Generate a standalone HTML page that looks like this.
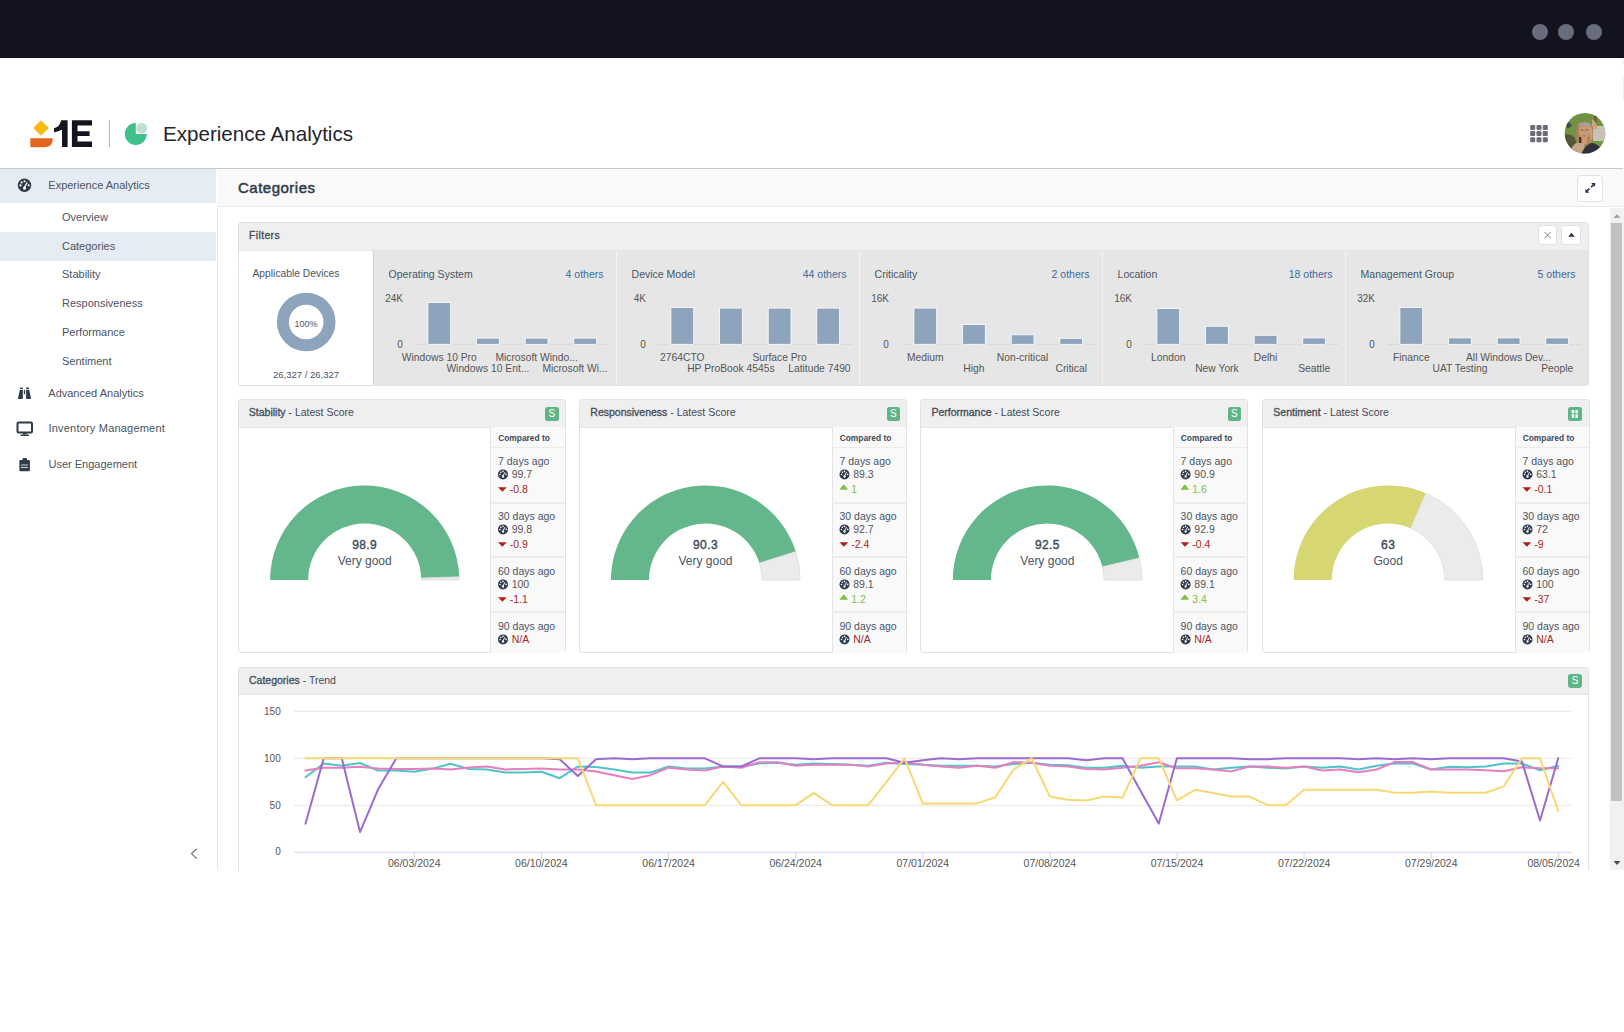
<!DOCTYPE html><html><head><meta charset="utf-8"><style>
*{box-sizing:border-box;margin:0;padding:0}
html,body{width:1624px;height:1032px;overflow:hidden;background:#fff;font-family:"Liberation Sans",sans-serif;color:#4a5464}
.a{position:absolute}
.t{position:absolute;white-space:nowrap;line-height:1}
</style></head><body><div class="a" style="left:0;top:0;width:1624px;height:58px;background:#12131e"></div><div class="a" style="left:1532px;top:24px;width:16px;height:16px;border-radius:50%;background:#676d7c"></div><div class="a" style="left:1558px;top:24px;width:16px;height:16px;border-radius:50%;background:#676d7c"></div><div class="a" style="left:1586px;top:24px;width:16px;height:16px;border-radius:50%;background:#676d7c"></div><div class="a" style="left:0;top:168px;width:1623px;height:1px;background:#c3c9c6"></div><svg class="a" style="left:0;top:100px" width="420" height="60" viewBox="0 100 420 60">
<path d="M41 120.3 L48.8 128 L41 135.8 L33.3 128 Z" fill="#fdb913"/>
<path d="M30.3 138.3 H52.8 Q52.8 147.2 45.3 147.2 H30.3 Z" fill="#e2661f"/>
<path d="M62 120.3 H67.6 V147.1 H62 V129.6 Q58.8 131.9 54 132.2 V128.2 Q59.6 127.2 61.2 120.3 Z" fill="#14141f"/>
<path d="M71.9 120.3 H92 V125.6 H77.5 V131.2 H89.6 V136 H77.5 V141.6 H92 V147.1 H71.9 Z" fill="#14141f"/>
<rect x="109" y="120" width="1" height="27" fill="#b5b5b8"/>
<path d="M135.8 123 A11 11 0 1 0 146.8 134 H135.8 Z" fill="#40c08a"/>
<circle cx="141.7" cy="128.2" r="5.4" fill="#bfe0d0"/>
</svg><div class="t" style="left:163px;top:123.5px;font-size:20.6px;color:#23252d">Experience Analytics</div><svg class="a" style="left:0;top:0" width="1624" height="170"><rect x="1530.2" y="125.0" width="5" height="5" rx="1.2" fill="#6a6a78"/><rect x="1536.5" y="125.0" width="5" height="5" rx="1.2" fill="#6a6a78"/><rect x="1542.8" y="125.0" width="5" height="5" rx="1.2" fill="#6a6a78"/><rect x="1530.2" y="131.1" width="5" height="5" rx="1.2" fill="#6a6a78"/><rect x="1536.5" y="131.1" width="5" height="5" rx="1.2" fill="#6a6a78"/><rect x="1542.8" y="131.1" width="5" height="5" rx="1.2" fill="#6a6a78"/><rect x="1530.2" y="137.2" width="5" height="5" rx="1.2" fill="#6a6a78"/><rect x="1536.5" y="137.2" width="5" height="5" rx="1.2" fill="#6a6a78"/><rect x="1542.8" y="137.2" width="5" height="5" rx="1.2" fill="#6a6a78"/></svg><svg class="a" style="left:1564px;top:113px" width="42" height="42" viewBox="0 0 42 42">
<defs><clipPath id="av"><circle cx="21" cy="20.3" r="20.3"/></clipPath></defs>
<g clip-path="url(#av)">
<rect width="42" height="42" fill="#6f9342"/>
<path d="M0 22 Q6 20 10 24 Q14 30 12 42 H0 Z" fill="#55553a"/>
<path d="M2 10 Q5 8 8 12 Q6 16 3 15 Z" fill="#3e4a52"/>
<rect x="30" y="3" width="2.5" height="18" fill="#6b5a3a"/>
<path d="M29 13 H42 V29 H29 Z" fill="#c9c1b4"/>
<path d="M28 6 Q34 10 33 16 H28 Z" fill="#c9a77c"/>
<path d="M29 28 H42 V34 H29 Z" fill="#6e9a44"/>
<ellipse cx="21" cy="12.5" rx="5.5" ry="3" fill="#a2a3a8"/>
<path d="M12.5 14 Q13 8 20.5 9 Q28 9 29 15 Q30 26 27 33 L14 33 Q11 25 12.5 14 Z" fill="#a8835e"/>
<ellipse cx="20.4" cy="18.3" rx="5.6" ry="7.8" fill="#c99a74"/><path d="M14.5 11.5 Q20 7.5 27 11 L26.5 13.5 Q20 10.5 15 13.5 Z" fill="#9fa1a8"/><path d="M25.5 12 Q29 14 28.5 24 L26 30 Z" fill="#c3a27c"/>
<rect x="17" y="16.5" width="2.4" height="1" fill="#6a5238"/><rect x="21.5" y="16.5" width="2.4" height="1" fill="#6a5238"/>
<rect x="18.8" y="22.6" width="3" height="0.8" fill="#8c5c48"/>
<rect x="17.5" y="25" width="5.5" height="6" fill="#d09a6c"/>
<rect x="15" y="24" width="2.3" height="10" fill="#3b3631"/>
<path d="M6 42 Q7 31 14 29.5 L20 31 Q21 36 19 42 Z" fill="#c7a687"/>
<path d="M17 42 Q20 33 27 30 Q35 29 40 42 Z" fill="#2e313d"/>
</g></svg><div class="a" style="left:1623px;top:59px;width:1px;height:6px;background:#eeeeee"></div><div class="a" style="left:1623px;top:77px;width:1px;height:23px;background:#eeeeee"></div><div class="a" style="left:216.5px;top:169px;width:1px;height:701.5px;background:#e9e9e9"></div><div class="a" style="left:0;top:169px;width:216px;height:34px;background:#e5ecf3"></div><div class="a" style="left:0;top:232px;width:216px;height:29px;background:#e5ecf3"></div><svg class="a" style="left:0;top:0" width="217" height="870"><circle cx="24.5" cy="185.25" r="6.7" fill="#2f3a4b"/><path d="M24.50 187.39 L27.18 182.17" stroke="#fff" stroke-width="1.27"/><ellipse cx="24.50" cy="188.13" rx="1.47" ry="1.61" fill="#fff"/><circle cx="21.62" cy="182.50" r="1.07" fill="#fff"/><circle cx="24.50" cy="181.23" r="1.07" fill="#fff"/><circle cx="20.48" cy="185.38" r="1.07" fill="#fff"/><circle cx="28.72" cy="185.25" r="1.07" fill="#fff"/><rect x="20" y="387.6" width="2.9" height="1.6" rx="0.7" fill="#2f3a4b"/><rect x="26.1" y="387.6" width="2.9" height="1.6" rx="0.7" fill="#2f3a4b"/><path d="M19.8 389.9 H22.9 V398.3 Q22.9 399.1 22.1 399.1 H18.7 Q17.9 399.1 18 398.2 Z M26.1 389.9 H29.2 L31 398.2 Q31.1 399.1 30.3 399.1 H26.9 Q26.1 399.1 26.1 398.3 Z M23.9 390 H25.1 V394.2 H23.9 Z" fill="#2f3a4b"/><rect x="17.5" y="422.5" width="14.5" height="10" rx="1" fill="none" stroke="#2f3a4b" stroke-width="2"/><rect x="23" y="432.5" width="3.5" height="2" fill="#2f3a4b"/><rect x="20.5" y="434.5" width="8.5" height="1.5" rx="0.5" fill="#2f3a4b"/><rect x="19.4" y="460" width="10.5" height="11.2" rx="1.2" fill="#2f3a4b"/><rect x="22.5" y="458" width="4.5" height="3" rx="1" fill="#2f3a4b"/><rect x="21" y="464.5" width="7" height="1" fill="#cfd4da"/><rect x="21" y="467" width="7" height="1" fill="#cfd4da"/><path d="M196.8 848.8 L191.5 853.6 L196.8 858.6" fill="none" stroke="#5c6270" stroke-width="1.1"/></svg><div class="t" style="left:48.3px;top:179.8px;font-size:11px;color:#4a5464;">Experience Analytics</div><div class="t" style="left:62px;top:211.8px;font-size:11px;color:#4a5464;">Overview</div><div class="t" style="left:62px;top:240.7px;font-size:11px;color:#4a5464;">Categories</div><div class="t" style="left:62px;top:269.4px;font-size:11px;color:#4a5464;">Stability</div><div class="t" style="left:62px;top:298.2px;font-size:11px;color:#4a5464;">Responsiveness</div><div class="t" style="left:62px;top:327.0px;font-size:11px;color:#4a5464;">Performance</div><div class="t" style="left:62px;top:355.8px;font-size:11px;color:#4a5464;">Sentiment</div><div class="t" style="left:48.3px;top:387.8px;font-size:11px;color:#4a5464;">Advanced Analytics</div><div class="t" style="left:48.5px;top:423.3px;font-size:11px;color:#4a5464;letter-spacing:0.2px">Inventory Management</div><div class="t" style="left:48.5px;top:458.6px;font-size:11px;color:#4a5464;">User Engagement</div><div class="a" style="left:217px;top:169px;width:1407px;height:38px;background:#fafafa;border-bottom:1px solid #e9e9e9"></div><div class="t" style="left:238px;top:180px;font-size:15px;letter-spacing:0.5px;-webkit-text-stroke:0.5px #2f3a4b;color:#2f3a4b">Categories</div><div class="a" style="left:1577.3px;top:174.5px;width:26px;height:27px;background:#fff;border:1px solid #e3e3e3;border-radius:4px"></div>
<svg class="a" style="left:1577px;top:174px" width="27" height="27"><path d="M16.3 10.9 L14.2 13.1 M10.2 16.9 L12.3 14.7" stroke="#2a3447" stroke-width="1.7"/><path d="M18.2 9 H14.1 L18.2 13.1 Z" fill="#2a3447"/><path d="M8.3 18.8 V14.7 L12.4 18.8 Z" fill="#2a3447"/></svg><div class="a" style="left:1610px;top:208px;width:14px;height:662px;background:#f1f1f1"></div><div class="a" style="left:1611.1px;top:222.8px;width:11.2px;height:578px;background:#c1c1c1"></div><svg class="a" style="left:1610px;top:208px" width="14" height="662"><path d="M3.5 10 L7 6 L10.5 10 Z" fill="#a3a3a3"/><path d="M3.5 653 L7 657 L10.5 653 Z" fill="#505050"/></svg><div class="a" style="left:237.5px;top:222px;width:1351.5px;height:163.5px;border:1px solid #e2e2e2;border-radius:3px;background:#fff;overflow:hidden"><div class="a" style="left:0;top:0;width:100%;height:27.5px;background:#efefef;border-bottom:1px solid #e6e6e6"></div></div><div class="t" style="left:249.0px;top:230.1px;font-size:10.5px;color:#414a58;letter-spacing:0.35px;-webkit-text-stroke:0.3px #414a58">Filters</div><div class="a" style="left:1538.3px;top:225.3px;width:19px;height:20px;background:#fff;border:1px solid #e0e0e0;border-radius:3.5px"></div><div class="a" style="left:1561.3px;top:225.3px;width:20px;height:20px;background:#fff;border:1px solid #e0e0e0;border-radius:3.5px"></div><svg class="a" style="left:1530px;top:220px" width="60" height="30"><path d="M14.5 12 L20.7 18.3 M20.7 12 L14.5 18.3" stroke="#7a7a7a" stroke-width="0.9"/><path d="M38.2 16.8 L41.5 12.8 L44.8 16.8 Z" fill="#2a3447"/></svg><div class="a" style="left:373px;top:250.5px;width:1px;height:134px;background:#d2d2d2"></div><div class="t" style="left:252.5px;top:268.8px;font-size:10.3px;color:#4a5464;">Applicable Devices</div><svg class="a" style="left:270px;top:286px" width="72" height="72"><circle cx="36.2" cy="36" r="23.3" fill="none" stroke="#8ea4bc" stroke-width="12"/></svg><div class="t" style="left:106.0px;width:400px;text-align:center;top:319.7px;font-size:9px;color:#4a5464;">100%</div><div class="t" style="left:106.0px;width:400px;text-align:center;top:369.6px;font-size:9.5px;color:#4a5464;">26,327 / 26,327</div><div class="a" style="left:374px;top:250.5px;width:242px;height:134px;background:#e6e6e6"></div><div class="t" style="left:388.6px;top:269.1px;font-size:10.5px;color:#4a5464;">Operating System</div><div class="t" style="left:203.5px;width:400px;text-align:right;top:269.1px;font-size:10.5px;color:#3b6aa0;">4 others</div><div class="t" style="left:3.0px;width:400px;text-align:right;top:294.4px;font-size:10px;color:#555;">24K</div><div class="t" style="left:2.7px;width:400px;text-align:right;top:339.5px;font-size:10px;color:#555;">0</div><div class="t" style="left:401.8px;top:352.8px;font-size:10.3px;color:#555;">Windows 10 Pro</div><div class="t" style="left:446.4px;top:364.3px;font-size:10.3px;color:#555;">Windows 10 Ent...</div><div class="t" style="left:495.4px;top:352.8px;font-size:10.3px;color:#555;">Microsoft Windo...</div><div class="t" style="left:542.4px;top:364.3px;font-size:10.3px;color:#555;">Microsoft Wi...</div><div class="a" style="left:617px;top:250.5px;width:242px;height:134px;background:#e6e6e6"></div><div class="a" style="left:616px;top:250.5px;width:1px;height:134px;background:#f3f3f3"></div><div class="t" style="left:631.6px;top:269.1px;font-size:10.5px;color:#4a5464;">Device Model</div><div class="t" style="left:446.5px;width:400px;text-align:right;top:269.1px;font-size:10.5px;color:#3b6aa0;">44 others</div><div class="t" style="left:246.0px;width:400px;text-align:right;top:294.4px;font-size:10px;color:#555;">4K</div><div class="t" style="left:245.7px;width:400px;text-align:right;top:339.5px;font-size:10px;color:#555;">0</div><div class="t" style="left:660.1px;top:352.8px;font-size:10.3px;color:#555;">2764CTO</div><div class="t" style="left:687.2px;top:364.3px;font-size:10.3px;color:#555;">HP ProBook 4545s</div><div class="t" style="left:752.4px;top:352.8px;font-size:10.3px;color:#555;">Surface Pro</div><div class="t" style="left:788.2px;top:364.3px;font-size:10.3px;color:#555;">Latitude 7490</div><div class="a" style="left:860px;top:250.5px;width:242px;height:134px;background:#e6e6e6"></div><div class="a" style="left:859px;top:250.5px;width:1px;height:134px;background:#f3f3f3"></div><div class="t" style="left:874.6px;top:269.1px;font-size:10.5px;color:#4a5464;">Criticality</div><div class="t" style="left:689.5px;width:400px;text-align:right;top:269.1px;font-size:10.5px;color:#3b6aa0;">2 others</div><div class="t" style="left:489.0px;width:400px;text-align:right;top:294.4px;font-size:10px;color:#555;">16K</div><div class="t" style="left:488.7px;width:400px;text-align:right;top:339.5px;font-size:10px;color:#555;">0</div><div class="t" style="left:907.0px;top:352.8px;font-size:10.3px;color:#555;">Medium</div><div class="t" style="left:963.3px;top:364.3px;font-size:10.3px;color:#555;">High</div><div class="t" style="left:996.8px;top:352.8px;font-size:10.3px;color:#555;">Non-critical</div><div class="t" style="left:1055.5px;top:364.3px;font-size:10.3px;color:#555;">Critical</div><div class="a" style="left:1103px;top:250.5px;width:242px;height:134px;background:#e6e6e6"></div><div class="a" style="left:1102px;top:250.5px;width:1px;height:134px;background:#f3f3f3"></div><div class="t" style="left:1117.6px;top:269.1px;font-size:10.5px;color:#4a5464;">Location</div><div class="t" style="left:932.5px;width:400px;text-align:right;top:269.1px;font-size:10.5px;color:#3b6aa0;">18 others</div><div class="t" style="left:732.0px;width:400px;text-align:right;top:294.4px;font-size:10px;color:#555;">16K</div><div class="t" style="left:731.7px;width:400px;text-align:right;top:339.5px;font-size:10px;color:#555;">0</div><div class="t" style="left:1151.1px;top:352.8px;font-size:10.3px;color:#555;">London</div><div class="t" style="left:1195.2px;top:364.3px;font-size:10.3px;color:#555;">New York</div><div class="t" style="left:1253.8px;top:352.8px;font-size:10.3px;color:#555;">Delhi</div><div class="t" style="left:1298.2px;top:364.3px;font-size:10.3px;color:#555;">Seattle</div><div class="a" style="left:1346px;top:250.5px;width:242px;height:134px;background:#e6e6e6"></div><div class="a" style="left:1345px;top:250.5px;width:1px;height:134px;background:#f3f3f3"></div><div class="t" style="left:1360.6px;top:269.1px;font-size:10.5px;color:#4a5464;">Management Group</div><div class="t" style="left:1175.5px;width:400px;text-align:right;top:269.1px;font-size:10.5px;color:#3b6aa0;">5 others</div><div class="t" style="left:975.0px;width:400px;text-align:right;top:294.4px;font-size:10px;color:#555;">32K</div><div class="t" style="left:974.7px;width:400px;text-align:right;top:339.5px;font-size:10px;color:#555;">0</div><div class="t" style="left:1393.0px;top:352.8px;font-size:10.3px;color:#555;">Finance</div><div class="t" style="left:1432.5px;top:364.3px;font-size:10.3px;color:#555;">UAT Testing</div><div class="t" style="left:1466.0px;top:352.8px;font-size:10.3px;color:#555;">All Windows Dev...</div><div class="t" style="left:1541.2px;top:364.3px;font-size:10.3px;color:#555;">People</div><svg class="a" style="left:0;top:0" width="1624" height="400"><line x1="415" y1="344.3" x2="609.5" y2="344.3" stroke="#c9d3df" stroke-width="1" stroke-dasharray="2,1"/><rect x="427.9" y="302.6" width="22.8" height="41.7" fill="#8ea4bc" stroke="#fff" stroke-width="0.8"/><rect x="476.5" y="338.1" width="22.8" height="6.2" fill="#8ea4bc" stroke="#fff" stroke-width="0.8"/><rect x="525.2" y="338.1" width="22.8" height="6.2" fill="#8ea4bc" stroke="#fff" stroke-width="0.8"/><rect x="573.8" y="338.1" width="22.8" height="6.2" fill="#8ea4bc" stroke="#fff" stroke-width="0.8"/><line x1="658" y1="344.3" x2="852.5" y2="344.3" stroke="#c9d3df" stroke-width="1" stroke-dasharray="2,1"/><rect x="670.9" y="307.5" width="22.8" height="36.8" fill="#8ea4bc" stroke="#fff" stroke-width="0.8"/><rect x="719.5" y="308.1" width="22.8" height="36.2" fill="#8ea4bc" stroke="#fff" stroke-width="0.8"/><rect x="768.2" y="308.1" width="22.8" height="36.2" fill="#8ea4bc" stroke="#fff" stroke-width="0.8"/><rect x="816.8" y="308.1" width="22.8" height="36.2" fill="#8ea4bc" stroke="#fff" stroke-width="0.8"/><line x1="901" y1="344.3" x2="1095.5" y2="344.3" stroke="#c9d3df" stroke-width="1" stroke-dasharray="2,1"/><rect x="913.9" y="308.1" width="22.8" height="36.2" fill="#8ea4bc" stroke="#fff" stroke-width="0.8"/><rect x="962.5" y="324.4" width="22.8" height="19.9" fill="#8ea4bc" stroke="#fff" stroke-width="0.8"/><rect x="1011.2" y="334.8" width="22.8" height="9.5" fill="#8ea4bc" stroke="#fff" stroke-width="0.8"/><rect x="1059.8" y="338.3" width="22.8" height="6.0" fill="#8ea4bc" stroke="#fff" stroke-width="0.8"/><line x1="1144" y1="344.3" x2="1338.5" y2="344.3" stroke="#c9d3df" stroke-width="1" stroke-dasharray="2,1"/><rect x="1156.9" y="308.5" width="22.8" height="35.8" fill="#8ea4bc" stroke="#fff" stroke-width="0.8"/><rect x="1205.5" y="326.3" width="22.8" height="18.0" fill="#8ea4bc" stroke="#fff" stroke-width="0.8"/><rect x="1254.2" y="335.3" width="22.8" height="9.0" fill="#8ea4bc" stroke="#fff" stroke-width="0.8"/><rect x="1302.8" y="337.9" width="22.8" height="6.4" fill="#8ea4bc" stroke="#fff" stroke-width="0.8"/><line x1="1387" y1="344.3" x2="1581.5" y2="344.3" stroke="#c9d3df" stroke-width="1" stroke-dasharray="2,1"/><rect x="1399.9" y="307.6" width="22.8" height="36.7" fill="#8ea4bc" stroke="#fff" stroke-width="0.8"/><rect x="1448.5" y="337.9" width="22.8" height="6.4" fill="#8ea4bc" stroke="#fff" stroke-width="0.8"/><rect x="1497.2" y="337.9" width="22.8" height="6.4" fill="#8ea4bc" stroke="#fff" stroke-width="0.8"/><rect x="1545.8" y="337.9" width="22.8" height="6.4" fill="#8ea4bc" stroke="#fff" stroke-width="0.8"/></svg><div class="a" style="left:237.5px;top:399px;width:328px;height:254px;border:1px solid #e2e2e2;border-radius:3px;background:#fff;overflow:hidden"><div class="a" style="left:0;top:0;width:100%;height:27.5px;background:#efefef;border-bottom:1px solid #e6e6e6"></div></div><div class="t" style="left:248.8px;top:407.2px;font-size:10.5px;color:#414a58"><span style="-webkit-text-stroke:0.3px #414a58">Stability</span> - Latest Score</div><div class="a" style="left:545.0px;top:407px;width:13.5px;height:13.5px;background:#5fb586;border-radius:2.5px;color:#fff;font-size:10px;line-height:13.5px;text-align:center">S</div><div class="a" style="left:490.2px;top:427px;width:74.3px;height:225.5px;background:#f9f9f9;border-left:1.5px solid #e4e4e4"></div><div class="a" style="left:490.2px;top:446.9px;width:74.8px;height:1.5px;background:#ececec"></div><div class="a" style="left:490.2px;top:502.0px;width:74.8px;height:1.5px;background:#ececec"></div><div class="a" style="left:490.2px;top:556.3px;width:74.8px;height:1.5px;background:#ececec"></div><div class="a" style="left:490.2px;top:611.4px;width:74.8px;height:1.5px;background:#ececec"></div><div class="t" style="left:498.2px;top:433.9px;font-size:8.4px;color:#414a58;font-weight:bold;">Compared to</div><div class="t" style="left:498.0px;top:455.8px;font-size:10.5px;color:#4a5464;">7 days ago</div><div class="t" style="left:511.7px;top:469.0px;font-size:10.5px;color:#555;">99.7</div><div class="t" style="left:509.7px;top:484.3px;font-size:10.5px;color:#a52626;">-0.8</div><div class="t" style="left:498.0px;top:510.8px;font-size:10.5px;color:#4a5464;">30 days ago</div><div class="t" style="left:511.7px;top:524.0px;font-size:10.5px;color:#555;">99.8</div><div class="t" style="left:509.7px;top:539.3px;font-size:10.5px;color:#a52626;">-0.9</div><div class="t" style="left:498.0px;top:565.8px;font-size:10.5px;color:#4a5464;">60 days ago</div><div class="t" style="left:511.7px;top:579.0px;font-size:10.5px;color:#555;">100</div><div class="t" style="left:509.7px;top:594.3px;font-size:10.5px;color:#a52626;">-1.1</div><div class="t" style="left:498.0px;top:620.8px;font-size:10.5px;color:#4a5464;">90 days ago</div><div class="t" style="left:511.7px;top:634.0px;font-size:10.5px;color:#a52626;">N/A</div><div class="t" style="left:164.7px;width:400px;text-align:center;top:538.8px;font-size:12px;color:#414a58;letter-spacing:0.4px;-webkit-text-stroke:0.4px #414a58">98.9</div><div class="t" style="left:164.7px;width:400px;text-align:center;top:554.7px;font-size:12px;color:#4a5464;">Very good</div><div class="a" style="left:579.0px;top:399px;width:328px;height:254px;border:1px solid #e2e2e2;border-radius:3px;background:#fff;overflow:hidden"><div class="a" style="left:0;top:0;width:100%;height:27.5px;background:#efefef;border-bottom:1px solid #e6e6e6"></div></div><div class="t" style="left:590.3px;top:407.2px;font-size:10.5px;color:#414a58"><span style="-webkit-text-stroke:0.3px #414a58">Responsiveness</span> - Latest Score</div><div class="a" style="left:886.5px;top:407px;width:13.5px;height:13.5px;background:#5fb586;border-radius:2.5px;color:#fff;font-size:10px;line-height:13.5px;text-align:center">S</div><div class="a" style="left:831.7px;top:427px;width:74.3px;height:225.5px;background:#f9f9f9;border-left:1.5px solid #e4e4e4"></div><div class="a" style="left:831.7px;top:446.9px;width:74.8px;height:1.5px;background:#ececec"></div><div class="a" style="left:831.7px;top:502.0px;width:74.8px;height:1.5px;background:#ececec"></div><div class="a" style="left:831.7px;top:556.3px;width:74.8px;height:1.5px;background:#ececec"></div><div class="a" style="left:831.7px;top:611.4px;width:74.8px;height:1.5px;background:#ececec"></div><div class="t" style="left:839.7px;top:433.9px;font-size:8.4px;color:#414a58;font-weight:bold;">Compared to</div><div class="t" style="left:839.5px;top:455.8px;font-size:10.5px;color:#4a5464;">7 days ago</div><div class="t" style="left:853.2px;top:469.0px;font-size:10.5px;color:#555;">89.3</div><div class="t" style="left:851.2px;top:484.3px;font-size:10.5px;color:#7dc142;">1</div><div class="t" style="left:839.5px;top:510.8px;font-size:10.5px;color:#4a5464;">30 days ago</div><div class="t" style="left:853.2px;top:524.0px;font-size:10.5px;color:#555;">92.7</div><div class="t" style="left:851.2px;top:539.3px;font-size:10.5px;color:#a52626;">-2.4</div><div class="t" style="left:839.5px;top:565.8px;font-size:10.5px;color:#4a5464;">60 days ago</div><div class="t" style="left:853.2px;top:579.0px;font-size:10.5px;color:#555;">89.1</div><div class="t" style="left:851.2px;top:594.3px;font-size:10.5px;color:#7dc142;">1.2</div><div class="t" style="left:839.5px;top:620.8px;font-size:10.5px;color:#4a5464;">90 days ago</div><div class="t" style="left:853.2px;top:634.0px;font-size:10.5px;color:#a52626;">N/A</div><div class="t" style="left:505.5px;width:400px;text-align:center;top:538.8px;font-size:12px;color:#414a58;letter-spacing:0.4px;-webkit-text-stroke:0.4px #414a58">90.3</div><div class="t" style="left:505.5px;width:400px;text-align:center;top:554.7px;font-size:12px;color:#4a5464;">Very good</div><div class="a" style="left:920.1px;top:399px;width:328px;height:254px;border:1px solid #e2e2e2;border-radius:3px;background:#fff;overflow:hidden"><div class="a" style="left:0;top:0;width:100%;height:27.5px;background:#efefef;border-bottom:1px solid #e6e6e6"></div></div><div class="t" style="left:931.4px;top:407.2px;font-size:10.5px;color:#414a58"><span style="-webkit-text-stroke:0.3px #414a58">Performance</span> - Latest Score</div><div class="a" style="left:1227.6px;top:407px;width:13.5px;height:13.5px;background:#5fb586;border-radius:2.5px;color:#fff;font-size:10px;line-height:13.5px;text-align:center">S</div><div class="a" style="left:1172.8px;top:427px;width:74.3px;height:225.5px;background:#f9f9f9;border-left:1.5px solid #e4e4e4"></div><div class="a" style="left:1172.8px;top:446.9px;width:74.8px;height:1.5px;background:#ececec"></div><div class="a" style="left:1172.8px;top:502.0px;width:74.8px;height:1.5px;background:#ececec"></div><div class="a" style="left:1172.8px;top:556.3px;width:74.8px;height:1.5px;background:#ececec"></div><div class="a" style="left:1172.8px;top:611.4px;width:74.8px;height:1.5px;background:#ececec"></div><div class="t" style="left:1180.8px;top:433.9px;font-size:8.4px;color:#414a58;font-weight:bold;">Compared to</div><div class="t" style="left:1180.6px;top:455.8px;font-size:10.5px;color:#4a5464;">7 days ago</div><div class="t" style="left:1194.3px;top:469.0px;font-size:10.5px;color:#555;">90.9</div><div class="t" style="left:1192.3px;top:484.3px;font-size:10.5px;color:#7dc142;">1.6</div><div class="t" style="left:1180.6px;top:510.8px;font-size:10.5px;color:#4a5464;">30 days ago</div><div class="t" style="left:1194.3px;top:524.0px;font-size:10.5px;color:#555;">92.9</div><div class="t" style="left:1192.3px;top:539.3px;font-size:10.5px;color:#a52626;">-0.4</div><div class="t" style="left:1180.6px;top:565.8px;font-size:10.5px;color:#4a5464;">60 days ago</div><div class="t" style="left:1194.3px;top:579.0px;font-size:10.5px;color:#555;">89.1</div><div class="t" style="left:1192.3px;top:594.3px;font-size:10.5px;color:#7dc142;">3.4</div><div class="t" style="left:1180.6px;top:620.8px;font-size:10.5px;color:#4a5464;">90 days ago</div><div class="t" style="left:1194.3px;top:634.0px;font-size:10.5px;color:#a52626;">N/A</div><div class="t" style="left:847.4px;width:400px;text-align:center;top:538.8px;font-size:12px;color:#414a58;letter-spacing:0.4px;-webkit-text-stroke:0.4px #414a58">92.5</div><div class="t" style="left:847.4px;width:400px;text-align:center;top:554.7px;font-size:12px;color:#4a5464;">Very good</div><div class="a" style="left:1262.0px;top:399px;width:328px;height:254px;border:1px solid #e2e2e2;border-radius:3px;background:#fff;overflow:hidden"><div class="a" style="left:0;top:0;width:100%;height:27.5px;background:#efefef;border-bottom:1px solid #e6e6e6"></div></div><div class="t" style="left:1273.3px;top:407.2px;font-size:10.5px;color:#414a58"><span style="-webkit-text-stroke:0.3px #414a58">Sentiment</span> - Latest Score</div><div class="a" style="left:1568.2px;top:407px;width:13.7px;height:13.6px;background:#5fb586;border-radius:2.5px"></div><svg class="a" style="left:1568.2px;top:407px" width="14" height="14"><rect x="3.6" y="3" width="2.6" height="3.3" fill="#fff"/><rect x="7.4" y="3" width="2.5" height="3.3" fill="#fff"/><rect x="3.6" y="7.3" width="2.6" height="3.5" fill="#fff"/><rect x="7.4" y="7.3" width="2.5" height="3.5" fill="#fff"/></svg><div class="a" style="left:1514.7px;top:427px;width:74.3px;height:225.5px;background:#f9f9f9;border-left:1.5px solid #e4e4e4"></div><div class="a" style="left:1514.7px;top:446.9px;width:74.8px;height:1.5px;background:#ececec"></div><div class="a" style="left:1514.7px;top:502.0px;width:74.8px;height:1.5px;background:#ececec"></div><div class="a" style="left:1514.7px;top:556.3px;width:74.8px;height:1.5px;background:#ececec"></div><div class="a" style="left:1514.7px;top:611.4px;width:74.8px;height:1.5px;background:#ececec"></div><div class="t" style="left:1522.7px;top:433.9px;font-size:8.4px;color:#414a58;font-weight:bold;">Compared to</div><div class="t" style="left:1522.5px;top:455.8px;font-size:10.5px;color:#4a5464;">7 days ago</div><div class="t" style="left:1536.2px;top:469.0px;font-size:10.5px;color:#555;">63.1</div><div class="t" style="left:1534.2px;top:484.3px;font-size:10.5px;color:#a52626;">-0.1</div><div class="t" style="left:1522.5px;top:510.8px;font-size:10.5px;color:#4a5464;">30 days ago</div><div class="t" style="left:1536.2px;top:524.0px;font-size:10.5px;color:#555;">72</div><div class="t" style="left:1534.2px;top:539.3px;font-size:10.5px;color:#a52626;">-9</div><div class="t" style="left:1522.5px;top:565.8px;font-size:10.5px;color:#4a5464;">60 days ago</div><div class="t" style="left:1536.2px;top:579.0px;font-size:10.5px;color:#555;">100</div><div class="t" style="left:1534.2px;top:594.3px;font-size:10.5px;color:#a52626;">-37</div><div class="t" style="left:1522.5px;top:620.8px;font-size:10.5px;color:#4a5464;">90 days ago</div><div class="t" style="left:1536.2px;top:634.0px;font-size:10.5px;color:#a52626;">N/A</div><div class="t" style="left:1188.2px;width:400px;text-align:center;top:538.8px;font-size:12px;color:#414a58;letter-spacing:0.4px;-webkit-text-stroke:0.4px #414a58">63</div><div class="t" style="left:1188.2px;width:400px;text-align:center;top:554.7px;font-size:12px;color:#4a5464;">Good</div><svg class="a" style="left:0;top:0" width="1624" height="700"><circle cx="503.0" cy="474.4" r="5" fill="#2f3a4b"/><path d="M503.00 476.00 L505.00 472.10" stroke="#fff" stroke-width="0.95"/><ellipse cx="503.00" cy="476.55" rx="1.10" ry="1.20" fill="#fff"/><circle cx="500.85" cy="472.35" r="0.80" fill="#fff"/><circle cx="503.00" cy="471.40" r="0.80" fill="#fff"/><circle cx="500.00" cy="474.50" r="0.80" fill="#fff"/><circle cx="506.15" cy="474.40" r="0.80" fill="#fff"/><path d="M498.0 487.2 L506.7 487.2 L502.4 491.7 Z" fill="#b01d1d"/><circle cx="503.0" cy="529.4000000000001" r="5" fill="#2f3a4b"/><path d="M503.00 531.00 L505.00 527.10" stroke="#fff" stroke-width="0.95"/><ellipse cx="503.00" cy="531.55" rx="1.10" ry="1.20" fill="#fff"/><circle cx="500.85" cy="527.35" r="0.80" fill="#fff"/><circle cx="503.00" cy="526.40" r="0.80" fill="#fff"/><circle cx="500.00" cy="529.50" r="0.80" fill="#fff"/><circle cx="506.15" cy="529.40" r="0.80" fill="#fff"/><path d="M498.0 542.2 L506.7 542.2 L502.4 546.7 Z" fill="#b01d1d"/><circle cx="503.0" cy="584.4000000000001" r="5" fill="#2f3a4b"/><path d="M503.00 586.00 L505.00 582.10" stroke="#fff" stroke-width="0.95"/><ellipse cx="503.00" cy="586.55" rx="1.10" ry="1.20" fill="#fff"/><circle cx="500.85" cy="582.35" r="0.80" fill="#fff"/><circle cx="503.00" cy="581.40" r="0.80" fill="#fff"/><circle cx="500.00" cy="584.50" r="0.80" fill="#fff"/><circle cx="506.15" cy="584.40" r="0.80" fill="#fff"/><path d="M498.0 597.2 L506.7 597.2 L502.4 601.7 Z" fill="#b01d1d"/><circle cx="503.0" cy="639.4000000000001" r="5" fill="#2f3a4b"/><path d="M503.00 641.00 L505.00 637.10" stroke="#fff" stroke-width="0.95"/><ellipse cx="503.00" cy="641.55" rx="1.10" ry="1.20" fill="#fff"/><circle cx="500.85" cy="637.35" r="0.80" fill="#fff"/><circle cx="503.00" cy="636.40" r="0.80" fill="#fff"/><circle cx="500.00" cy="639.50" r="0.80" fill="#fff"/><circle cx="506.15" cy="639.40" r="0.80" fill="#fff"/><path d="M270.10 580.0 A94.6 94.6 0 0 1 459.24 576.73 L421.17 578.05 A56.5 56.5 0 0 0 308.20 580.0 Z" fill="#64b78b"/><path d="M459.24 576.73 A94.6 94.6 0 0 1 459.30 580.0 L421.20 580.0 A56.5 56.5 0 0 0 421.17 578.05 Z" fill="#ebebeb" stroke="#d6d6d6" stroke-width="0.6"/><circle cx="844.5" cy="474.4" r="5" fill="#2f3a4b"/><path d="M844.50 476.00 L846.50 472.10" stroke="#fff" stroke-width="0.95"/><ellipse cx="844.50" cy="476.55" rx="1.10" ry="1.20" fill="#fff"/><circle cx="842.35" cy="472.35" r="0.80" fill="#fff"/><circle cx="844.50" cy="471.40" r="0.80" fill="#fff"/><circle cx="841.50" cy="474.50" r="0.80" fill="#fff"/><circle cx="847.65" cy="474.40" r="0.80" fill="#fff"/><path d="M839.3 489.8 L843.1 485.1 Q843.8 484.4 844.5 485.1 L848.1 489.8 Z" fill="#7dc142"/><circle cx="844.5" cy="529.4000000000001" r="5" fill="#2f3a4b"/><path d="M844.50 531.00 L846.50 527.10" stroke="#fff" stroke-width="0.95"/><ellipse cx="844.50" cy="531.55" rx="1.10" ry="1.20" fill="#fff"/><circle cx="842.35" cy="527.35" r="0.80" fill="#fff"/><circle cx="844.50" cy="526.40" r="0.80" fill="#fff"/><circle cx="841.50" cy="529.50" r="0.80" fill="#fff"/><circle cx="847.65" cy="529.40" r="0.80" fill="#fff"/><path d="M839.5 542.2 L848.2 542.2 L843.9 546.7 Z" fill="#b01d1d"/><circle cx="844.5" cy="584.4000000000001" r="5" fill="#2f3a4b"/><path d="M844.50 586.00 L846.50 582.10" stroke="#fff" stroke-width="0.95"/><ellipse cx="844.50" cy="586.55" rx="1.10" ry="1.20" fill="#fff"/><circle cx="842.35" cy="582.35" r="0.80" fill="#fff"/><circle cx="844.50" cy="581.40" r="0.80" fill="#fff"/><circle cx="841.50" cy="584.50" r="0.80" fill="#fff"/><circle cx="847.65" cy="584.40" r="0.80" fill="#fff"/><path d="M839.3 599.8 L843.1 595.1 Q843.8 594.4 844.5 595.1 L848.1 599.8 Z" fill="#7dc142"/><circle cx="844.5" cy="639.4000000000001" r="5" fill="#2f3a4b"/><path d="M844.50 641.00 L846.50 637.10" stroke="#fff" stroke-width="0.95"/><ellipse cx="844.50" cy="641.55" rx="1.10" ry="1.20" fill="#fff"/><circle cx="842.35" cy="637.35" r="0.80" fill="#fff"/><circle cx="844.50" cy="636.40" r="0.80" fill="#fff"/><circle cx="841.50" cy="639.50" r="0.80" fill="#fff"/><circle cx="847.65" cy="639.40" r="0.80" fill="#fff"/><path d="M610.90 580.0 A94.6 94.6 0 0 1 795.74 551.62 L759.40 563.05 A56.5 56.5 0 0 0 649.00 580.0 Z" fill="#64b78b"/><path d="M795.74 551.62 A94.6 94.6 0 0 1 800.10 580.0 L762.00 580.0 A56.5 56.5 0 0 0 759.40 563.05 Z" fill="#ebebeb" stroke="#d6d6d6" stroke-width="0.6"/><circle cx="1185.6" cy="474.4" r="5" fill="#2f3a4b"/><path d="M1185.60 476.00 L1187.60 472.10" stroke="#fff" stroke-width="0.95"/><ellipse cx="1185.60" cy="476.55" rx="1.10" ry="1.20" fill="#fff"/><circle cx="1183.45" cy="472.35" r="0.80" fill="#fff"/><circle cx="1185.60" cy="471.40" r="0.80" fill="#fff"/><circle cx="1182.60" cy="474.50" r="0.80" fill="#fff"/><circle cx="1188.75" cy="474.40" r="0.80" fill="#fff"/><path d="M1180.4 489.8 L1184.2 485.1 Q1184.9 484.4 1185.6 485.1 L1189.2 489.8 Z" fill="#7dc142"/><circle cx="1185.6" cy="529.4000000000001" r="5" fill="#2f3a4b"/><path d="M1185.60 531.00 L1187.60 527.10" stroke="#fff" stroke-width="0.95"/><ellipse cx="1185.60" cy="531.55" rx="1.10" ry="1.20" fill="#fff"/><circle cx="1183.45" cy="527.35" r="0.80" fill="#fff"/><circle cx="1185.60" cy="526.40" r="0.80" fill="#fff"/><circle cx="1182.60" cy="529.50" r="0.80" fill="#fff"/><circle cx="1188.75" cy="529.40" r="0.80" fill="#fff"/><path d="M1180.6 542.2 L1189.3 542.2 L1185.0 546.7 Z" fill="#b01d1d"/><circle cx="1185.6" cy="584.4000000000001" r="5" fill="#2f3a4b"/><path d="M1185.60 586.00 L1187.60 582.10" stroke="#fff" stroke-width="0.95"/><ellipse cx="1185.60" cy="586.55" rx="1.10" ry="1.20" fill="#fff"/><circle cx="1183.45" cy="582.35" r="0.80" fill="#fff"/><circle cx="1185.60" cy="581.40" r="0.80" fill="#fff"/><circle cx="1182.60" cy="584.50" r="0.80" fill="#fff"/><circle cx="1188.75" cy="584.40" r="0.80" fill="#fff"/><path d="M1180.4 599.8 L1184.2 595.1 Q1184.9 594.4 1185.6 595.1 L1189.2 599.8 Z" fill="#7dc142"/><circle cx="1185.6" cy="639.4000000000001" r="5" fill="#2f3a4b"/><path d="M1185.60 641.00 L1187.60 637.10" stroke="#fff" stroke-width="0.95"/><ellipse cx="1185.60" cy="641.55" rx="1.10" ry="1.20" fill="#fff"/><circle cx="1183.45" cy="637.35" r="0.80" fill="#fff"/><circle cx="1185.60" cy="636.40" r="0.80" fill="#fff"/><circle cx="1182.60" cy="639.50" r="0.80" fill="#fff"/><circle cx="1188.75" cy="639.40" r="0.80" fill="#fff"/><path d="M952.80 580.0 A94.6 94.6 0 0 1 1139.39 557.92 L1102.34 566.81 A56.5 56.5 0 0 0 990.90 580.0 Z" fill="#64b78b"/><path d="M1139.39 557.92 A94.6 94.6 0 0 1 1142.00 580.0 L1103.90 580.0 A56.5 56.5 0 0 0 1102.34 566.81 Z" fill="#ebebeb" stroke="#d6d6d6" stroke-width="0.6"/><circle cx="1527.5" cy="474.4" r="5" fill="#2f3a4b"/><path d="M1527.50 476.00 L1529.50 472.10" stroke="#fff" stroke-width="0.95"/><ellipse cx="1527.50" cy="476.55" rx="1.10" ry="1.20" fill="#fff"/><circle cx="1525.35" cy="472.35" r="0.80" fill="#fff"/><circle cx="1527.50" cy="471.40" r="0.80" fill="#fff"/><circle cx="1524.50" cy="474.50" r="0.80" fill="#fff"/><circle cx="1530.65" cy="474.40" r="0.80" fill="#fff"/><path d="M1522.5 487.2 L1531.2 487.2 L1526.9 491.7 Z" fill="#b01d1d"/><circle cx="1527.5" cy="529.4000000000001" r="5" fill="#2f3a4b"/><path d="M1527.50 531.00 L1529.50 527.10" stroke="#fff" stroke-width="0.95"/><ellipse cx="1527.50" cy="531.55" rx="1.10" ry="1.20" fill="#fff"/><circle cx="1525.35" cy="527.35" r="0.80" fill="#fff"/><circle cx="1527.50" cy="526.40" r="0.80" fill="#fff"/><circle cx="1524.50" cy="529.50" r="0.80" fill="#fff"/><circle cx="1530.65" cy="529.40" r="0.80" fill="#fff"/><path d="M1522.5 542.2 L1531.2 542.2 L1526.9 546.7 Z" fill="#b01d1d"/><circle cx="1527.5" cy="584.4000000000001" r="5" fill="#2f3a4b"/><path d="M1527.50 586.00 L1529.50 582.10" stroke="#fff" stroke-width="0.95"/><ellipse cx="1527.50" cy="586.55" rx="1.10" ry="1.20" fill="#fff"/><circle cx="1525.35" cy="582.35" r="0.80" fill="#fff"/><circle cx="1527.50" cy="581.40" r="0.80" fill="#fff"/><circle cx="1524.50" cy="584.50" r="0.80" fill="#fff"/><circle cx="1530.65" cy="584.40" r="0.80" fill="#fff"/><path d="M1522.5 597.2 L1531.2 597.2 L1526.9 601.7 Z" fill="#b01d1d"/><circle cx="1527.5" cy="639.4000000000001" r="5" fill="#2f3a4b"/><path d="M1527.50 641.00 L1529.50 637.10" stroke="#fff" stroke-width="0.95"/><ellipse cx="1527.50" cy="641.55" rx="1.10" ry="1.20" fill="#fff"/><circle cx="1525.35" cy="637.35" r="0.80" fill="#fff"/><circle cx="1527.50" cy="636.40" r="0.80" fill="#fff"/><circle cx="1524.50" cy="639.50" r="0.80" fill="#fff"/><circle cx="1530.65" cy="639.40" r="0.80" fill="#fff"/><path d="M1293.60 580.0 A94.6 94.6 0 0 1 1425.77 493.18 L1410.64 528.15 A56.5 56.5 0 0 0 1331.70 580.0 Z" fill="#d6d673"/><path d="M1425.77 493.18 A94.6 94.6 0 0 1 1482.80 580.0 L1444.70 580.0 A56.5 56.5 0 0 0 1410.64 528.15 Z" fill="#ebebeb" stroke="#d6d6d6" stroke-width="0.6"/></svg><div class="a" style="left:237.5px;top:667px;width:1351.5px;height:210px;border:1px solid #e2e2e2;border-radius:3px;background:#fff;overflow:hidden"><div class="a" style="left:0;top:0;width:100%;height:26.8px;background:#efefef;border-bottom:1px solid #e6e6e6"></div></div><div class="t" style="left:249px;top:674.6px;font-size:10.5px;color:#414a58"><span style="-webkit-text-stroke:0.3px #414a58">Categories</span> - Trend</div><div class="a" style="left:1568px;top:674px;width:14px;height:14px;background:#5fb586;border-radius:3px;color:#fff;font-size:10px;line-height:14px;text-align:center">S</div><div class="t" style="left:-119.3px;width:400px;text-align:right;top:707.2px;font-size:10px;color:#555;">150</div><div class="t" style="left:-119.3px;width:400px;text-align:right;top:754.2px;font-size:10px;color:#555;">100</div><div class="t" style="left:-119.3px;width:400px;text-align:right;top:801.2px;font-size:10px;color:#555;">50</div><div class="t" style="left:-119.3px;width:400px;text-align:right;top:846.9px;font-size:10px;color:#555;">0</div><div class="t" style="left:388.0px;top:857.8px;font-size:10.5px;color:#555;">06/03/2024</div><div class="t" style="left:515.1px;top:857.8px;font-size:10.5px;color:#555;">06/10/2024</div><div class="t" style="left:642.3px;top:857.8px;font-size:10.5px;color:#555;">06/17/2024</div><div class="t" style="left:769.4px;top:857.8px;font-size:10.5px;color:#555;">06/24/2024</div><div class="t" style="left:896.5px;top:857.8px;font-size:10.5px;color:#555;">07/01/2024</div><div class="t" style="left:1023.6px;top:857.8px;font-size:10.5px;color:#555;">07/08/2024</div><div class="t" style="left:1150.7px;top:857.8px;font-size:10.5px;color:#555;">07/15/2024</div><div class="t" style="left:1277.9px;top:857.8px;font-size:10.5px;color:#555;">07/22/2024</div><div class="t" style="left:1405.0px;top:857.8px;font-size:10.5px;color:#555;">07/29/2024</div><div class="t" style="left:1527.4px;top:857.8px;font-size:10.5px;color:#555;">08/05/2024</div><svg class="a" style="left:0;top:0" width="1624" height="870"><line x1="293.7" y1="711.3" x2="1571.5" y2="711.3" stroke="#e6e6e6" stroke-width="1"/><line x1="293.7" y1="758.3" x2="1571.5" y2="758.3" stroke="#e6e6e6" stroke-width="1"/><line x1="293.7" y1="805.3" x2="1571.5" y2="805.3" stroke="#e6e6e6" stroke-width="1"/><line x1="293.7" y1="852.3" x2="1571.5" y2="852.3" stroke="#ccd6eb" stroke-width="1"/><line x1="414.3" y1="852.3" x2="414.3" y2="859" stroke="#ccd6eb" stroke-width="1"/><line x1="541.4" y1="852.3" x2="541.4" y2="859" stroke="#ccd6eb" stroke-width="1"/><line x1="668.5" y1="852.3" x2="668.5" y2="859" stroke="#ccd6eb" stroke-width="1"/><line x1="795.7" y1="852.3" x2="795.7" y2="859" stroke="#ccd6eb" stroke-width="1"/><line x1="922.8" y1="852.3" x2="922.8" y2="859" stroke="#ccd6eb" stroke-width="1"/><line x1="1049.9" y1="852.3" x2="1049.9" y2="859" stroke="#ccd6eb" stroke-width="1"/><line x1="1177.0" y1="852.3" x2="1177.0" y2="859" stroke="#ccd6eb" stroke-width="1"/><line x1="1304.1" y1="852.3" x2="1304.1" y2="859" stroke="#ccd6eb" stroke-width="1"/><line x1="1431.3" y1="852.3" x2="1431.3" y2="859" stroke="#ccd6eb" stroke-width="1"/><line x1="1558.4" y1="852.3" x2="1558.4" y2="859" stroke="#ccd6eb" stroke-width="1"/><polyline points="305.5,777.2 323.7,763.6 341.8,765.8 360.0,763.0 378.1,770.5 396.3,770.5 414.4,771.7 432.6,768.6 450.7,763.7 468.9,769.0 487.1,769.5 505.2,772.4 523.4,772.4 541.5,771.8 559.7,778.2 577.8,766.5 596.0,767.1 614.1,769.5 632.3,772.6 650.4,772.6 668.6,766.5 686.8,768.6 704.9,768.6 723.1,766.5 741.2,766.5 759.4,763.4 777.5,762.8 795.7,764.7 813.8,763.4 832.0,764.1 850.2,764.7 868.3,765.8 886.5,762.8 904.6,764.1 922.8,764.7 940.9,765.8 959.1,765.8 977.2,765.8 995.4,766.5 1013.5,764.1 1031.7,762.8 1049.9,764.7 1068.0,765.3 1086.2,767.7 1104.3,767.7 1122.5,765.8 1140.6,767.7 1158.8,766.5 1176.9,766.5 1195.1,766.5 1213.2,769.4 1231.4,767.7 1249.6,766.5 1267.7,767.7 1285.9,768.6 1304.0,766.5 1322.2,767.7 1340.3,766.5 1358.5,769.5 1376.6,765.8 1394.8,763.6 1413.0,763.6 1431.1,769.5 1449.3,766.8 1467.4,767.3 1485.6,766.5 1503.7,763.6 1521.9,763.6 1540.0,770.2 1558.2,765.8" fill="none" stroke="#4fc4c8" stroke-width="2" stroke-linejoin="round" stroke-linecap="round"/><polyline points="305.5,770.5 323.7,767.7 341.8,767.7 360.0,766.7 378.1,768.6 396.3,769.1 414.4,769.1 432.6,768.6 450.7,769.5 468.9,767.4 487.1,766.5 505.2,769.4 523.4,769.0 541.5,768.6 559.7,769.5 577.8,769.4 596.0,771.4 614.1,775.2 632.3,778.9 650.4,775.2 668.6,767.7 686.8,769.5 704.9,770.5 723.1,766.5 741.2,767.7 759.4,762.2 777.5,762.2 795.7,765.8 813.8,764.7 832.0,764.7 850.2,764.7 868.3,766.5 886.5,763.4 904.6,762.2 922.8,764.7 940.9,766.5 959.1,767.7 977.2,765.8 995.4,767.7 1013.5,762.2 1031.7,762.8 1049.9,765.8 1068.0,766.5 1086.2,769.0 1104.3,769.5 1122.5,767.7 1140.6,765.8 1158.8,762.2 1176.9,768.3 1195.1,768.3 1213.2,769.4 1231.4,771.4 1249.6,766.5 1267.7,766.5 1285.9,767.7 1304.0,766.5 1322.2,770.5 1340.3,769.5 1358.5,772.2 1376.6,769.5 1394.8,762.1 1413.0,762.1 1431.1,769.5 1449.3,769.5 1467.4,769.5 1485.6,770.2 1503.7,771.2 1521.9,767.3 1540.0,768.3 1558.2,768.3" fill="none" stroke="#e57fc0" stroke-width="2" stroke-linejoin="round" stroke-linecap="round"/><polyline points="305.5,823.7 323.7,758.3 341.8,758.3 360.0,832.1 378.1,789.3 396.3,758.3 414.4,758.3 432.6,758.3 450.7,758.3 468.9,758.3 487.1,758.3 505.2,758.3 523.4,758.3 541.5,758.3 559.7,759.2 577.8,776.1 596.0,759.2 614.1,758.3 632.3,759.2 650.4,758.3 668.6,758.3 686.8,758.3 704.9,758.3 723.1,766.5 741.2,766.5 759.4,758.3 777.5,758.3 795.7,758.3 813.8,759.2 832.0,758.3 850.2,758.3 868.3,758.3 886.5,758.3 904.6,762.8 922.8,760.3 940.9,758.3 959.1,759.2 977.2,758.3 995.4,758.3 1013.5,758.3 1031.7,758.3 1049.9,758.3 1068.0,758.3 1086.2,760.3 1104.3,758.3 1122.5,758.3 1140.6,791.0 1158.8,823.6 1176.9,758.3 1195.1,758.3 1213.2,758.3 1231.4,758.3 1249.6,759.2 1267.7,759.2 1285.9,758.3 1304.0,758.3 1322.2,758.3 1340.3,758.3 1358.5,759.2 1376.6,758.3 1394.8,759.2 1413.0,758.3 1431.1,759.2 1449.3,758.3 1467.4,758.3 1485.6,758.3 1503.7,758.3 1521.9,761.4 1540.0,820.5 1558.2,758.3" fill="none" stroke="#9a6bd0" stroke-width="2" stroke-linejoin="round" stroke-linecap="round"/><polyline points="305.5,758.3 323.7,758.3 341.8,758.3 360.0,758.3 378.1,758.3 396.3,758.3 414.4,758.3 432.6,758.3 450.7,758.3 468.9,758.3 487.1,758.3 505.2,758.3 523.4,758.3 541.5,758.3 559.7,758.3 577.8,758.3 596.0,805.2 614.1,805.2 632.3,805.2 650.4,805.2 668.6,805.2 686.8,805.2 704.9,805.2 723.1,781.8 741.2,805.2 759.4,805.2 777.5,805.2 795.7,805.2 813.8,792.9 832.0,805.2 850.2,805.2 868.3,805.2 886.5,781.8 904.6,758.3 922.8,803.4 940.9,803.4 959.1,803.4 977.2,803.4 995.4,797.3 1013.5,769.5 1031.7,758.3 1049.9,796.6 1068.0,799.7 1086.2,800.4 1104.3,796.6 1122.5,797.6 1140.6,758.3 1158.8,758.3 1176.9,800.4 1195.1,789.8 1213.2,792.9 1231.4,796.6 1249.6,796.6 1267.7,805.2 1285.9,805.2 1304.0,789.8 1322.2,789.8 1340.3,789.8 1358.5,789.8 1376.6,789.8 1394.8,792.8 1413.0,792.8 1431.1,791.6 1449.3,792.8 1467.4,792.8 1485.6,792.8 1503.7,786.4 1521.9,758.3 1540.0,758.3 1558.2,810.9" fill="none" stroke="#f8d873" stroke-width="2" stroke-linejoin="round" stroke-linecap="round"/></svg><div class="a" style="left:0;top:870px;width:1624px;height:162px;background:#fff"></div></body></html>
